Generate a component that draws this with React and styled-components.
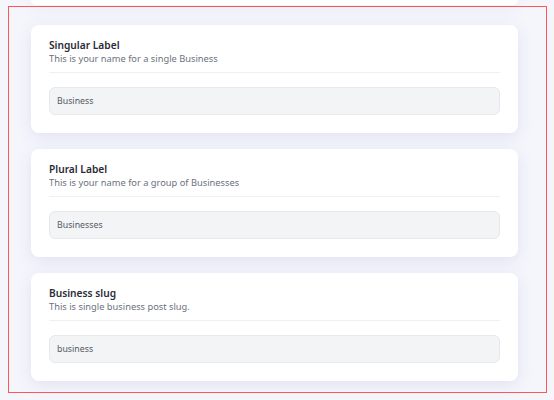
import React from "react";
import styled, { createGlobalStyle } from "styled-components";

const Global = createGlobalStyle`
  html, body { margin: 0; padding: 0; background: #f5f6fc; }
  body { font-family: "Noto Sans", "Open Sans", sans-serif; }
  * { box-sizing: border-box; }
`;

const Page = styled.div`
  width: 554px;
  height: 400px;
  overflow: hidden;
  background: #f5f6fc;
`;

const Column = styled.div`
  width: 487px;
  margin-left: 31px;
`;

const CardTail = styled.div`
  height: 5px;
  background: #fff;
  border-radius: 0 0 8px 8px;
  box-shadow: 0 4px 14px rgba(86, 96, 160, 0.12);
`;

const Highlight = styled.section`
  margin: 1px 7px 0 8px;
  height: 387px;
  border: 1px solid #ff5757;
  padding: 18px 28px 0 22px;
  display: flex;
  flex-direction: column;
  gap: 16px;
`;

const Card = styled.div`
  background: #fff;
  border-radius: 8px;
  box-shadow: 0 4px 16px rgba(86, 96, 160, 0.13);
  padding: 13px 18px 18px;
  height: 108px;
  display: flex;
  flex-direction: column;
`;

const Title = styled.div`
  font-size: 10.2px;
  font-weight: 600;
  color: #2b2b38;
  line-height: 14px;
`;

const Hint = styled.div`
  font-size: 9.3px;
  color: #6b7180;
  line-height: 13px;
`;

const Divider = styled.div`
  height: 1px;
  background: #eef0f4;
  margin: 7px 0 14px;
  flex-shrink: 0;
`;

const Field = styled.input`
  height: 28px;
  flex-shrink: 0;
  width: 100%;
  border: 1px solid #e6e8ec;
  background: #f3f4f6;
  border-radius: 6px;
  padding: 0 7px;
  font-family: "Noto Sans", "Open Sans", sans-serif;
  font-size: 8.8px;
  color: #555a64;
  outline: none;
`;

const fields = [
  { title: "Singular Label", hint: "This is your name for a single Business", value: "Business" },
  { title: "Plural Label", hint: "This is your name for a group of Businesses", value: "Businesses" },
  { title: "Business slug", hint: "This is single business post slug.", value: "business" },
];

export default function App() {
  return (
    <Page>
      <Global />
      <Column>
        <CardTail />
      </Column>
      <Highlight>
        {fields.map((f) => (
          <Card key={f.title}>
            <Title>{f.title}</Title>
            <Hint>{f.hint}</Hint>
            <Divider />
            <Field defaultValue={f.value} readOnly />
          </Card>
        ))}
      </Highlight>
    </Page>
  );
}
